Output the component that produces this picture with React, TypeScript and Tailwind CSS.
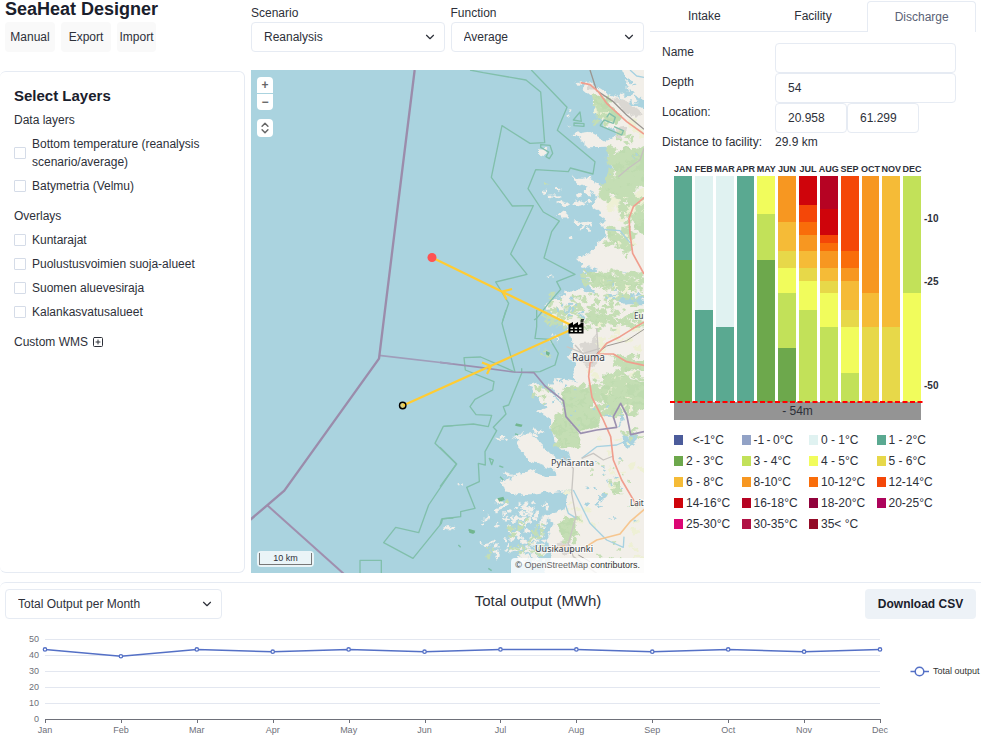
import React from 'react';
import { ChevronDown, ChevronsUpDown, PlusSquare } from 'lucide-react';

const FIELD = 'h-[30px] rounded border border-[#e6ebf3] bg-white px-3 text-xs text-[#2d3039]';

function Dropdown({ id, label, options, hideLabel, className }: { id: string; label: string; options: string[]; hideLabel?: boolean; className?: string }) {
  return (
    <div className={className}>
      {!hideLabel && <label htmlFor={id} className="block h-[18px] leading-[18px]">{label}</label>}
      <div className="relative">
        <select id={id} aria-label={label} className={`${FIELD} w-full appearance-none`}>
          {options.map((o) => <option key={o}>{o}</option>)}
        </select>
        <ChevronDown className="pointer-events-none absolute right-2 top-2 size-3.5" />
      </div>
    </div>
  );
}

function Layer({ id, label }: { id: string; label: string }) {
  return (
    <div className="mt-1.5 flex items-center gap-1.5">
      <input id={id} type="checkbox" className="size-3 shrink-0 appearance-none rounded-[1px] border border-[#d5dce8] bg-white checked:bg-blue-500" />
      <label htmlFor={id}>{label}</label>
    </div>
  );
}

/* ---------- map ---------- */

type Patch = [number, number, number, number, number, number];

// x, y, width, height of the area, number of patches, patch radius
const ISLANDS_NORTH: Patch[] = [
  [315, 385, 60, 30, 5, 7], [360, 415, 25, 60, 6, 8], [390, 385, 60, 50, 9, 9], [410, 485, 40, 25, 7, 8],
  [400, 350, 60, 20, 6, 7], [380, 155, 15, 45, 3, 5], [550, 35, 60, 90, 18, 12], [420, 580, 60, 40, 8, 8],
  [315, 648, 30, 18, 3, 5], [390, 530, 10, 12, 1, 5], [470, 440, 50, 60, 8, 9], [400, 65, 40, 10, 3, 5],
];
const ISLANDS_SOUTH: Patch[] = [
  [170, 575, 120, 60, 30, 7], [190, 620, 130, 110, 56, 7], [125, 600, 50, 60, 8, 5], [15, 635, 30, 20, 4, 6],
  [125, 685, 50, 60, 8, 7], [160, 380, 60, 20, 3, 6], [190, 490, 60, 60, 14, 9], [240, 690, 80, 80, 26, 8],
  [230, 350, 80, 70, 12, 8], [330, 60, 50, 60, 5, 5], [50, 518, 30, 14, 2, 4], [240, 580, 90, 40, 8, 6],
];
const WOODS_NORTH: Patch[] = [
  [465, 105, 60, 90, 22, 8], [505, 265, 105, 80, 50, 10], [485, 340, 125, 80, 70, 11], [540, 420, 70, 80, 18, 11],
  [500, 500, 75, 70, 26, 10], [430, 635, 180, 55, 70, 8], [320, 700, 290, 80, 110, 7], [550, 560, 30, 40, 4, 6],
  [315, 370, 10, 6, 2, 5], [530, 215, 50, 40, 6, 8],
];
const WOODS_SOUTH: Patch[] = [
  [310, 5, 75, 50, 20, 7], [440, 0, 170, 60, 52, 8], [290, 110, 50, 40, 7, 5], [375, 225, 100, 110, 80, 10],
  [345, 310, 70, 100, 40, 10], [460, 190, 150, 130, 90, 10], [520, 135, 92, 40, 28, 9], [280, 230, 50, 50, 14, 6],
  [540, 350, 70, 50, 9, 8], [365, 620, 50, 80, 20, 8], [200, 630, 110, 110, 48, 6], [515, 510, 25, 45, 7, 8],
  [130, 690, 35, 55, 6, 5], [165, 558, 35, 20, 4, 5], [560, 580, 50, 30, 4, 5], [460, 690, 90, 70, 8, 5], [440, 440, 160, 120, 14, 4],
];
const FIELDS_NORTH: Patch[] = [[555, 390, 57, 90, 12, 12], [470, 130, 30, 50, 6, 9], [530, 520, 50, 50, 8, 10], [500, 420, 90, 60, 9, 11], [480, 650, 130, 60, 9, 10], [560, 150, 50, 80, 7, 10]];
const FIELDS_SOUTH: Patch[] = [[480, 40, 130, 90, 16, 11], [450, 180, 130, 120, 16, 10], [440, 380, 170, 170, 12, 9], [380, 540, 80, 110, 10, 9], [500, 620, 110, 150, 8, 9]];
const PONDS_SOUTH: Patch[] = [[445, 530, 50, 60, 10, 6], [460, 440, 80, 40, 4, 5], [550, 375, 40, 20, 6, 8], [480, 620, 120, 60, 3, 4], [350, 210, 60, 60, 7, 4], [390, 300, 30, 60, 3, 4], [290, 250, 50, 50, 4, 4], [460, 290, 50, 60, 4, 5], [540, 300, 15, 50, 4, 5], [430, 480, 120, 60, 5, 4]];
const PONDS_NORTH: Patch[] = [[500, 700, 112, 30, 8, 7], [340, 705, 100, 65, 16, 6], [560, 60, 50, 70, 7, 6], [480, 630, 100, 60, 4, 4], [570, 260, 40, 40, 2, 4]];

function scatter(areas: Patch[], seed: number): string {
  let s = seed;
  const rnd = () => {
    s = (s * 16807) % 2147483647;
    return s / 2147483647;
  };
  let d = '';
  for (const [x, y, w, h, count, size] of areas) {
    for (let i = 0; i < count; i++) {
      const cx = x + rnd() * w;
      const cy = y + rnd() * h;
      for (let k = 0; k < 8; k++) {
        const a = (k * Math.PI) / 4;
        const r = size * (0.45 + rnd() * 0.85);
        d += `${k ? 'L' : 'M'}${(cx + Math.cos(a) * r * 1.2).toFixed(1)} ${(cy + Math.sin(a) * r * 0.85).toFixed(1)}`;
      }
      d += 'Z';
    }
  }
  return d;
}

function CoastMap() {
  return (
    <svg viewBox="251 70 393 503" className="block h-auto w-full bg-[#aad3df]" role="img" aria-label="Coast near Rauma with intake and discharge pipes">
      <defs>
        <filter id="rough" x="-5%" y="-5%" width="110%" height="110%" colorInterpolationFilters="sRGB">
          <feTurbulence type="fractalNoise" baseFrequency="0.12" numOctaves="3" seed="4" />
          <feDisplacementMap in="SourceGraphic" scale="8" xChannelSelector="R" yChannelSelector="G" />
        </filter>
      </defs>

      <g filter="url(#rough)">
        <g transform="translate(440 60) scale(.33333)">
          <path fill="#f2efe9" d="M535 -10 660 -10V145L608 118 590 100 570 88 558 60Z" />
          <path fill="#f2efe9" d="M430 90 445 62 470 80 500 100 560 125 660 165V800H380L330 760 310 740 350 715 380 692 430 690 470 705 450 670 428 635 480 632 430 612 412 595 455 575 470 550 500 530 490 500 495 470 455 440 480 405 450 390 420 375 398 350 430 350 480 375 515 355 520 330 505 300 500 260 445 262 425 242 398 222 450 215 500 242 535 225 505 205 480 180 465 150 460 115Z" />
          <path fill="#aad3df" d="M490 706 540 696 612 722 660 735V745L580 738 530 724Z" />
          <path fill="#f2efe9" d="M300 272 312 262 324 275 314 288 300 284Z" />
          <path fill="#dad7d2" d="M520 115 560 120 605 160 590 175 540 145ZM440 70 462 75 470 90 450 88ZM520 205 555 200 550 235 530 230Z" />
          <path fill="#bedbaf" d="M460 105 490 110 520 140 545 175 530 195 500 180 475 175ZM505 300 535 275 560 262 585 275 600 258 660 275V345L600 370 570 400 520 405 485 400 510 370 530 345ZM560 430 600 445 625 420 660 430V530L600 520 565 460ZM500 510 560 550 555 570 510 540ZM430 630 500 640 570 665 610 680 560 690 500 680 450 665Z" />
        </g>
        <g transform="translate(440 310) scale(.33333)">
          <path fill="#f2efe9" d="M380 -20 660 -20V830H290L335 740 320 680 345 640 310 615 370 600 380 565 390 540 320 548 250 558 190 542 195 525 225 500 270 480 310 498 350 498 330 474 270 450 225 402 250 375 275 372 330 430 355 450 395 455 385 430 345 400 330 330 292 305 325 292 300 278 268 222 290 215 330 250 375 290 352 260 328 225 345 205 410 215 395 190 410 160 382 140 400 110 390 60Z" />
          <path fill="#bedbaf" d="M375 230 430 235 470 250 450 300 480 350 420 365 385 330 365 270ZM345 320 380 325 420 370 415 410 365 412 335 360ZM490 190 560 200 660 230V320L570 290 520 320 480 260ZM440 5 500 15 490 50 450 40ZM545 145 660 160V190L560 180ZM350 640 400 620 415 680 370 690ZM515 520 540 515 540 555 520 550Z" />
          <path fill="#dad7d2" d="M420 100 455 95 470 75 478 110 495 125 480 150 455 172 420 160 390 140 430 130ZM350 700 385 690 410 720 380 735 355 725Z" />
          <path fill="#aad3df" d="M545 395 570 370 600 375 580 395 560 420ZM540 290 552 340 545 350Z" />
        </g>
        <g transform="translate(440 60) scale(.33333)">
          <path fill="#f2efe9" d={scatter(ISLANDS_NORTH, 71)} />
          <path fill="#eef0d5" d={scatter(FIELDS_NORTH, 12)} />
          <path fill="#c4deb4" d={scatter(WOODS_NORTH, 33)} />
          <path fill="#aad3df" d={scatter(PONDS_NORTH, 57)} />
        </g>
        <g transform="translate(440 310) scale(.33333)">
          <path fill="#f2efe9" d={scatter(ISLANDS_SOUTH, 19)} />
          <path fill="#eef0d5" d={scatter(FIELDS_SOUTH, 44)} />
          <path fill="#c4deb4" d={scatter(WOODS_SOUTH, 85)} />
          <path fill="#aad3df" d={scatter(PONDS_SOUTH, 23)} />
        </g>
      </g>

      <g transform="translate(440 60) scale(.33333)" fill="none" strokeLinejoin="round">
        <path stroke="#81bfab" strokeWidth="4" d="M90 30 130 38 258 60 302 96 314 248 270 250 186 197 154 352 217 438 280 437 212 582 261 643 167 666 206 730 188 782M274 30 381 142 352 211 465 305 459 342 391 324 385 335 287 329 264 386 310 456 358 483 335 515 312 594 405 643 350 665 362 688 330 725 290 775 282 780M302 254 330 256 338 280 328 296 318 290 326 276 302 262ZM400 180 420 156 424 184ZM402 189 432 191 432 199 402 197ZM480 197 492 180 520 190 526 172 508 160 500 172M480 197 545 225 550 212 522 200" />
        <path stroke="#a6d1e1" strokeWidth="4" d="M570 30 590 48 612 52M490 508 540 512 572 550" />
        <path stroke="#c5c1be" strokeWidth="4" d="M612 265 600 300 565 325 535 350" />
        <path stroke="#9a9691" strokeWidth="4" d="M450 30 470 92 520 125 560 165 612 208" />
        <path stroke="#f09e8e" strokeWidth="5" d="M422 68 450 74 474 94 500 130 560 185 612 222M640 390 580 440 567 475 570 520 578 580 612 642" />
      </g>
      <g transform="translate(440 310) scale(.33333)" fill="none" strokeLinejoin="round">
        <path stroke="#a6d1e1" strokeWidth="4" d="M425 445 470 410 530 405 565 390M400 540 425 590 450 640 500 690 550 712 552 680M375 580 385 610 410 625" />
        <path stroke="#c9c6c2" strokeWidth="4" d="M370 440 400 475 395 550 408 620 385 700 400 740 470 790M425 445 460 430 490 450 520 438M380 110 430 130 480 115M470 55 475 130 455 160M405 105 450 155" />
        <path stroke="#9d9994" strokeWidth="3" d="M612 58 560 92 500 108 470 130M415 735 450 755" />
        <path stroke="#f09e8e" strokeWidth="5" d="M640 20 580 55 540 80 500 100 475 130 450 160 446 200 456 262 490 330 512 380 520 450 545 510 592 590M478 132 520 132 560 155 640 172" />
        <path stroke="#f6c690" strokeWidth="5" d="M335 715 375 708M435 712 470 690 540 672 570 635 620 592" />
        <path stroke="#81bfab" strokeWidth="4" d="M198 0 186 40 225 186 122 141 72 143 76 180 162 215 158 240 105 268 90 290 108 314 155 316 145 350 100 342 10 349M0 412 50 462 0 530M245 175 245 190 206 285 190 290 198 312 160 352 170 362 135 425 136 465 115 460 118 515 80 532 105 595 62 605 62 620 5 627 0 645M290 0 290 50 285 85 330 88 355 130 345 165 300 185 245 188" />
        <path stroke="#9b90b0" strokeWidth="5" d="M0 157 120 172 220 186 282 188 315 228 370 272 378 320 422 370 470 360 530 352 520 320 542 280 560 315 572 374 612 365" />
        <path stroke="#7dbfa6" strokeWidth="4" d="M148 445 160 450 155 464ZM178 468 190 472M180 500 190 510M85 660 105 668M225 345 245 348M225 372 235 374M145 775 155 782M55 705 62 712" />
        <path fill="#72b68f" d="M318 123 330 128 326 138 318 133ZM228 340 248 344 244 350 228 348ZM172 565 190 560 194 570 178 575ZM86 656 106 662 100 672 88 668Z" />
      </g>
      <g transform="translate(240 310) scale(.33333)" fill="none" strokeLinejoin="round">
        <path stroke="#81bfab" strokeWidth="4" d="M640 347 610 349 585 400 650 463M650 460 566 585 536 668 467 652 431 698 519 745 604 640 608 626 640 624M360 792V751H424V792" />
        <path stroke="#a09dba" strokeWidth="5" d="M417 136 640 162" />
        <path stroke="#a08fae" strokeWidth="6" d="M82 586 312 792" />
        <path stroke="#9b8cab" strokeWidth="7" d="M524 -720 476 -333 417 146 133 542 30 630" />
      </g>

      <g fill="#3a3f48" fontFamily='"Noto Sans", sans-serif' stroke="#fff" strokeOpacity=".6" strokeWidth="2" paintOrder="stroke">
        <text x="572" y="361" fontSize="10">Rauma</text>
        <text x="551" y="466" fontSize="9">Pyhäranta</text>
        <text x="535" y="552" fontSize="9">Uusikaupunki</text>
        <text x="630" y="506" fontSize="8">Lait</text>
        <text x="634" y="319" fontSize="8">Eu</text>
      </g>

      <g fill="none" stroke="#ffcc33" strokeWidth="2.2">
        <path d="M432 257.500 576 327.500 403 405.500M512 289 502.500 291.500 506.500 299.500M482 362.500 491 366 487 374" />
      </g>
      <circle cx="432" cy="257.500" r="4.500" fill="#ff5252" />
      <circle cx="402.700" cy="405.500" r="3.200" fill="#ffcc33" fillOpacity=".55" stroke="#000" strokeWidth="1.400" />
      <g>
        <path d="M568.500 324.500 573 322 573 325 578 322V325L580.500 324V322.500H583.500V333.500H568.500ZM580.500 320.500H583.500V321.800H580.500ZM581 319.300H584V320.300H581Z" />
        <path fill="#e8eadf" d="M570.500 327.500H573V329H570.500ZM574.700 327.500H577.200V329H574.700ZM579 327.500H581.500V329H579ZM570.500 330.500H573V332H570.500ZM574.700 330.500H577.200V332H574.700ZM579 330.500H581.500V332H579Z" />
      </g>
    </svg>
  );
}

/* ---------- temperature profile ---------- */

const COLORS = ['#4c5c9b', '#92a2c6', '#e0f2f1', '#5aa991', '#6da84c', '#c2e159', '#f1fc5c', '#e7d849', '#f5bb37', '#f79721', '#f96d0a', '#f44708', '#cf040b', '#b60323', '#91023b', '#ad035b', '#dc0674', '#b01144', '#930b27'];
const RANGES = ['\u00a0\u00a0<-1°C', '-1\u2009-\u20090°C', '0 - 1°C', '1 - 2°C', '2 - 3°C', '3 - 4°C', '4 - 5°C', '5 - 6°C', '6 - 8°C', '8-10°C', '10-12°C', '12-14°C', '14-16°C', '16-18°C', '18-20°C', '20-25°C', '25-30°C', '30-35°C', '35< °C'];

// each layer: [depth of its lower edge in metres, colour index]
const PROFILE: { month: string; layers: [number, number][] }[] = [
  { month: 'JAN', layers: [[20, 3], [54, 4]] },
  { month: 'FEB', layers: [[32, 2], [54, 3]] },
  { month: 'MAR', layers: [[36, 2], [54, 3]] },
  { month: 'APR', layers: [[54, 3]] },
  { month: 'MAY', layers: [[9, 6], [20, 5], [54, 4]] },
  { month: 'JUN', layers: [[11, 9], [18, 8], [22, 7], [28, 6], [41, 5], [54, 4]] },
  { month: 'JUL', layers: [[7, 12], [11, 11], [14, 10], [18, 9], [22, 8], [25, 7], [32, 6], [54, 5]] },
  { month: 'AUG', layers: [[8, 13], [14, 12], [16, 11], [18, 10], [22, 9], [25, 8], [28, 7], [36, 6], [54, 5]] },
  { month: 'SEP', layers: [[18, 11], [22, 10], [25, 9], [32, 8], [36, 7], [47, 6], [54, 5]] },
  { month: 'OCT', layers: [[28, 9], [36, 8], [54, 7]] },
  { month: 'NOV', layers: [[36, 8], [54, 7]] },
  { month: 'DEC', layers: [[28, 5], [54, 6]] },
];

function Profile() {
  return (
    <div className="ml-6 mt-[11px]">
      <div className="flex">
        <div className="w-[247px]">
          <div className="grid grid-cols-12 gap-[3px]">
            {PROFILE.map(({ month, layers }) => (
              <div key={month}>
                <div className="flex h-[14px] justify-center text-[9px] font-bold leading-[14px]">{month}</div>
                <div className="flex h-[226px] flex-col">
                  {layers.map(([depth, color], i) => (
                    <div key={depth} style={{ flexGrow: depth - (i ? layers[i - 1][0] : 0), backgroundColor: COLORS[color] }} />
                  ))}
                </div>
              </div>
            ))}
          </div>
          <div className="relative h-[18px] bg-[#949494] text-center leading-[18px]">
            - 54m
            <svg className="absolute -left-1 -top-px h-0.5 w-[255px]" aria-hidden="true">
              <path d="M0 1H255" stroke="#f00" strokeWidth="2" strokeDasharray="5 2.500" />
            </svg>
          </div>
        </div>
        <div className="ml-[3px] mt-[15px] flex h-[226px] flex-col text-[10px] font-bold">
          <div className="grow-[10]" />
          <div className="flex h-0 items-center">-10</div>
          <div className="grow-[15]" />
          <div className="flex h-0 items-center">-25</div>
          <div className="grow-[25]" />
          <div className="flex h-0 items-center">-50</div>
          <div className="grow-[4]" />
        </div>
      </div>
      <ul className="mt-[9px] grid w-[270px] grid-cols-4">
        {RANGES.map((r, i) => (
          <li key={r} className="flex h-[21px] items-center gap-[3px] whitespace-nowrap">
            <span className="h-2.5 w-[9px] shrink-0" style={{ backgroundColor: COLORS[i] }} />
            {r}
          </li>
        ))}
      </ul>
    </div>
  );
}

/* ---------- output chart ---------- */

const MONTHS = ['Jan', 'Feb', 'Mar', 'Apr', 'May', 'Jun', 'Jul', 'Aug', 'Sep', 'Oct', 'Nov', 'Dec'];
const OUTPUT = [43.5, 39.3, 43.5, 42.1, 43.5, 42.1, 43.5, 43.5, 42.1, 43.5, 42.1, 43.5];

function OutputChart() {
  const px = (i: number) => 45 + (i * 835) / 11;
  const py = (v: number) => 100.5 - v * 1.61;
  return (
    <svg viewBox="0 0 981 118" className="block h-auto w-full" fontSize="9" fill="#6e7079" role="img" aria-label="Total output per month">
      {[0, 10, 20, 30, 40, 50].map((v) => {
        const y = Math.floor(py(v)) + 0.5;
        return (
          <g key={v}>
            <path d={`M45 ${y}H880`} stroke={v ? '#e3e7f0' : '#6e7079'} />
            <text x="39" y={y + 2} textAnchor="end">{v}</text>
          </g>
        );
      })}
      {MONTHS.map((m, i) => (
        <g key={m}>
          <path d={`M${Math.round(px(i)) + 0.5} 100V104`} stroke="#6e7079" />
          <text x={px(i)} y="114" textAnchor="middle">{m}</text>
        </g>
      ))}
      <g fill="#fff" stroke="#5470c6" strokeWidth="1.500">
        <polyline fill="none" points={OUTPUT.map((v, i) => `${px(i)},${py(v)}`).join(' ')} />
        {OUTPUT.map((v, i) => <circle key={i} cx={px(i)} cy={py(v)} r="1.700" strokeWidth="1.300" />)}
        <path d="M910.500 52.500H929" />
        <circle cx="919.500" cy="52.500" r="4.300" />
      </g>
      <text x="933" y="55" fill="#333">Total output</text>
    </svg>
  );
}

export default function App() {
  return (
    <div className="overflow-hidden bg-white font-['Liberation_Sans',Arial,sans-serif] text-xs leading-[18px] text-[#2d3039]">
      <main className="grid grid-cols-[245px_minmax(0,1fr)_331px]">
        <section className="flex flex-col">
          <header className="h-[71px] pl-[5px]">
            <h1 className="h-[22px] text-lg font-bold leading-[18px] text-[#1a202c]">SeaHeat Designer</h1>
            <div className="flex gap-1.5">
              <button className="h-[30px] w-[50px] rounded bg-[#f9f9f9]">Manual</button>
              <button className="h-[30px] w-[50px] rounded bg-[#f9f9f9]">Export</button>
              <button className="h-[30px] w-[39px] rounded bg-[#f9f9f9]">Import</button>
            </div>
          </header>
          <div className="flex-1 rounded-md border border-l-0 border-[#e6ebf3] pl-3.5 pr-8 pt-[15px]">
            <h2 className="text-[15px] font-bold text-[#1a202c]">Select Layers</h2>
            <h3 className="mt-1.5">Data layers</h3>
            <Layer id="temperature" label="Bottom temperature (reanalysis scenario/average)" />
            <Layer id="batymetria" label="Batymetria (Velmu)" />
            <h3 className="mt-3">Overlays</h3>
            <Layer id="kuntarajat" label="Kuntarajat" />
            <Layer id="puolustus" label="Puolustusvoimien suoja-alueet" />
            <Layer id="aluevesi" label="Suomen aluevesiraja" />
            <Layer id="kalankasvatus" label="Kalankasvatusalueet" />
            <div className="mt-3 flex items-center gap-1">
              Custom WMS
              <button aria-label="Add custom WMS"><PlusSquare className="size-3" /></button>
            </div>
          </div>
        </section>

        <section className="px-1.5">
          <div className="flex h-[70px] gap-1.5 pt-1">
            <Dropdown className="flex-1" id="scenario" label="Scenario" options={['Reanalysis']} />
            <Dropdown className="flex-1" id="function" label="Function" options={['Average']} />
          </div>
          <div className="relative">
            <CoastMap />
            <div className="absolute left-1.5 top-[7px] flex flex-col gap-px text-xs font-bold text-[#666]">
              <button aria-label="Zoom in" className="flex size-4 items-center justify-center rounded-t-sm bg-white">+</button>
              <button aria-label="Zoom out" className="flex size-4 items-center justify-center rounded-b-sm bg-white">−</button>
              <button aria-label="Zoom to extent" className="mt-2 flex h-[18px] w-4 items-center justify-center rounded-sm bg-white"><ChevronsUpDown className="size-3.5" strokeWidth={2.5} /></button>
            </div>
            <div className="absolute bottom-1.5 left-1.5 rounded bg-white/75 p-0.5">
              <div className="h-3 w-[53px] border border-t-0 border-[#777] text-center text-[9px] leading-[10px]">10 km</div>
            </div>
            <div className="absolute bottom-0 right-0 rounded-tl bg-white/80 px-1 text-[9px] leading-[15px] text-[#333]">
              © <a href="#osm" className="text-[#666]">OpenStreetMap</a> contributors.
            </div>
          </div>
        </section>

        <section>
          <div role="tablist" className="mr-[5px] mt-px grid grid-cols-3 border-b border-[#e6ebf3]">
            <button role="tab" aria-selected="false" className="h-[30px]">Intake</button>
            <button role="tab" aria-selected="false" className="h-[30px]">Facility</button>
            <button role="tab" aria-selected="true" className="-mb-px h-[31px] rounded-t border border-b-0 border-[#e6ebf3] bg-white text-[#5a6275]">Discharge</button>
          </div>
          <div className="ml-3 mt-[11px] grid grid-cols-[113px_181px]">
            <label htmlFor="name">Name</label>
            <input id="name" className={FIELD} />
            <label htmlFor="depth">Depth</label>
            <input id="depth" defaultValue="54" className={FIELD} />
            <label htmlFor="lon">Location:</label>
            <div className="flex">
              <input id="lon" defaultValue="20.958" className={`${FIELD} w-[72px]`} />
              <input aria-label="Latitude" defaultValue="61.299" className={`${FIELD} w-[72px]`} />
            </div>
            <span>Distance to facility:</span>
            <span>29.9 km</span>
          </div>
          <Profile />
        </section>
      </main>

      <section className="mt-[9px] rounded-tl-md border-t border-[#e6ebf3]">
        <div className="grid grid-cols-3 items-start px-[5px] pt-1.5">
          <Dropdown hideLabel className="w-[217px]" id="output" label="Output" options={['Total Output per Month']} />
          <h2 className="pl-[146px] text-[15px] leading-6 whitespace-nowrap">Total output (MWh)</h2>
          <button className="h-[30px] w-[111px] justify-self-end rounded bg-[#edf2f7] font-bold text-[#1a202c]">Download CSV</button>
        </div>
        <OutputChart />
      </section>
    </div>
  );
}
